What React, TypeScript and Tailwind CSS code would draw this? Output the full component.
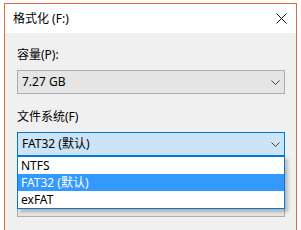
import React from "react";

const FONT = "font-['Noto_Sans','Noto_Sans_CJK_SC',sans-serif]";

function Chevron() {
  return (
    <svg width="9" height="5" viewBox="0 0 9 5" className="shrink-0">
      <polyline points="0.5,0.5 4.5,4.5 8.5,0.5" fill="none" stroke="#404040" strokeWidth="1" />
    </svg>
  );
}

function Combo({
  text,
  active = false,
  className = "",
}: {
  text: string;
  active?: boolean;
  className?: string;
}) {
  return (
    <div
      className={[
        "flex h-[24px] items-center justify-between border pl-[4px] pr-[4px] text-[12px] text-black",
        active ? "border-[#0078d7] bg-[#cce4f7]" : "border-[#adadad] bg-[#e5e5e5]",
        className,
      ].join(" ")}
    >
      <span className="leading-[16px]">{text}</span>
      <Chevron />
    </div>
  );
}

const OPCIONES = ["NTFS", "FAT32 (默认)", "exFAT"];

export default function App() {
  return (
    <div className={`h-[230px] w-[301px] overflow-hidden bg-white pl-[4px] pt-[3px] ${FONT}`}>
      <div className="flex h-[240px] w-[293px] flex-col border border-[#e2693a]">
        {/* barra de título */}
        <div className="flex h-[29px] items-center justify-between bg-white pl-[8px] pr-[9px]">
          <span className="text-[12px] leading-[16px] text-black">格式化 (F:)</span>
          <svg width="11" height="11" viewBox="0 0 11 11">
            <path d="M0.5 0.5 L10.5 10.5 M10.5 0.5 L0.5 10.5" stroke="#111" strokeWidth="1" />
          </svg>
        </div>

        <div className="flex-1 bg-[#f0f0f0] pl-[12px] pr-[11px] pt-[14px] text-[12px] text-black">
          <div className="h-[16px] leading-[16px]">容量(P):</div>
          <Combo text="7.27 GB" className="mt-[7px]" />

          <div className="mt-[15px] h-[16px] leading-[16px]">文件系统(F)</div>
          <div className="relative mt-[7px]">
            <Combo text="FAT32 (默认)" active />
            <div className="absolute left-0 right-0 top-full z-10 border border-[#0078d7] bg-white shadow-[3px_3px_3px_rgba(0,0,0,0.22)]">
              {OPCIONES.map((o, i) => (
                <div
                  key={o}
                  className={[
                    "h-[17px] pl-[3px] leading-[17px]",
                    i === 1 ? "bg-[#3399ff] text-white" : "text-black",
                  ].join(" ")}
                >
                  {o}
                </div>
              ))}
            </div>
          </div>

          {/* combo de tamaño de unidad, tapado por la lista */}
          <div className="mt-[15px] h-[16px]" />
          <Combo text="" className="mt-[6px]" />
        </div>
      </div>
    </div>
  );
}
